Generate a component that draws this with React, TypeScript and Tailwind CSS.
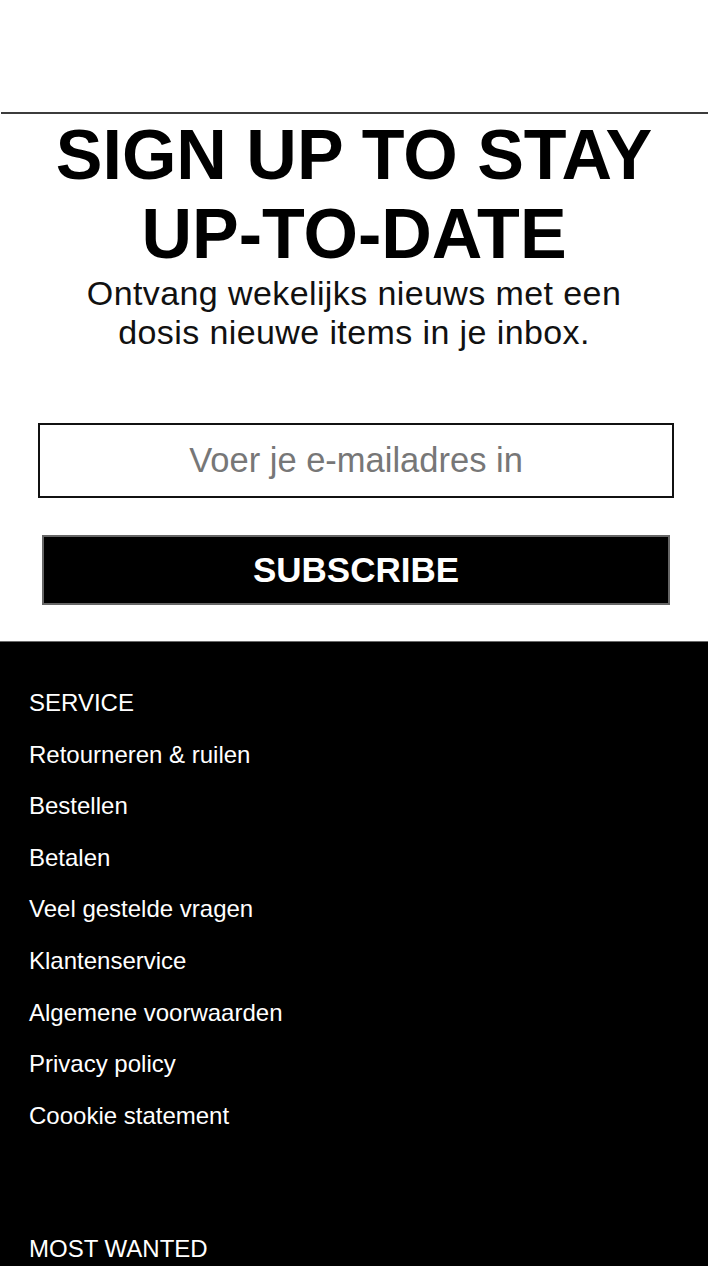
import React from "react";

const links = [
  "Retourneren & ruilen",
  "Bestellen",
  "Betalen",
  "Veel gestelde vragen",
  "Klantenservice",
  "Algemene voorwaarden",
  "Privacy policy",
  "Coookie statement",
];

export default function App() {
  return (
    <div className="min-h-[1266px] w-[708px] bg-white font-['Liberation_Sans',Arial,sans-serif] text-black overflow-hidden">
      <div className="h-[112px]" />
      <div className="ml-[1px] h-[2px] bg-[#3c3c3c]" />
      <h1 className="mt-[2px] text-center text-[70px] font-bold leading-[79px] text-black">
        SIGN UP TO STAY
        <br />
        UP-TO-DATE
      </h1>
      <p className="text-center text-[34px] leading-[39px] tracking-[0.4px] text-[#111]">
        Ontvang wekelijks nieuws met een
        <br />
        dosis nieuwe items in je inbox.
      </p>
      <div className="mt-[71px] ml-[38px] w-[636px] h-[75px] border-2 border-[#111] flex items-center">
        <input
          type="email"
          placeholder="Voer je e-mailadres in"
          className="w-full h-full bg-transparent text-center text-[34.5px] outline-none placeholder:text-[#777] font-['Liberation_Sans',Arial,sans-serif]"
        />
      </div>
      <button className="mt-[37px] ml-[42px] w-[628px] h-[70px] bg-black border-2 border-[#666] text-white text-[35px] font-bold flex items-center justify-center">
        SUBSCRIBE
      </button>
      <footer className="mt-[36px] bg-black border-t border-[#6a6a6a] pt-[35px] pl-[29px] pb-[40px] text-white text-[24px] leading-[51.6px]">
        <div>SERVICE</div>
        {links.map((l) => (
          <div key={l}>{l}</div>
        ))}
        <div className="mt-[82px]">MOST WANTED</div>
      </footer>
    </div>
  );
}
